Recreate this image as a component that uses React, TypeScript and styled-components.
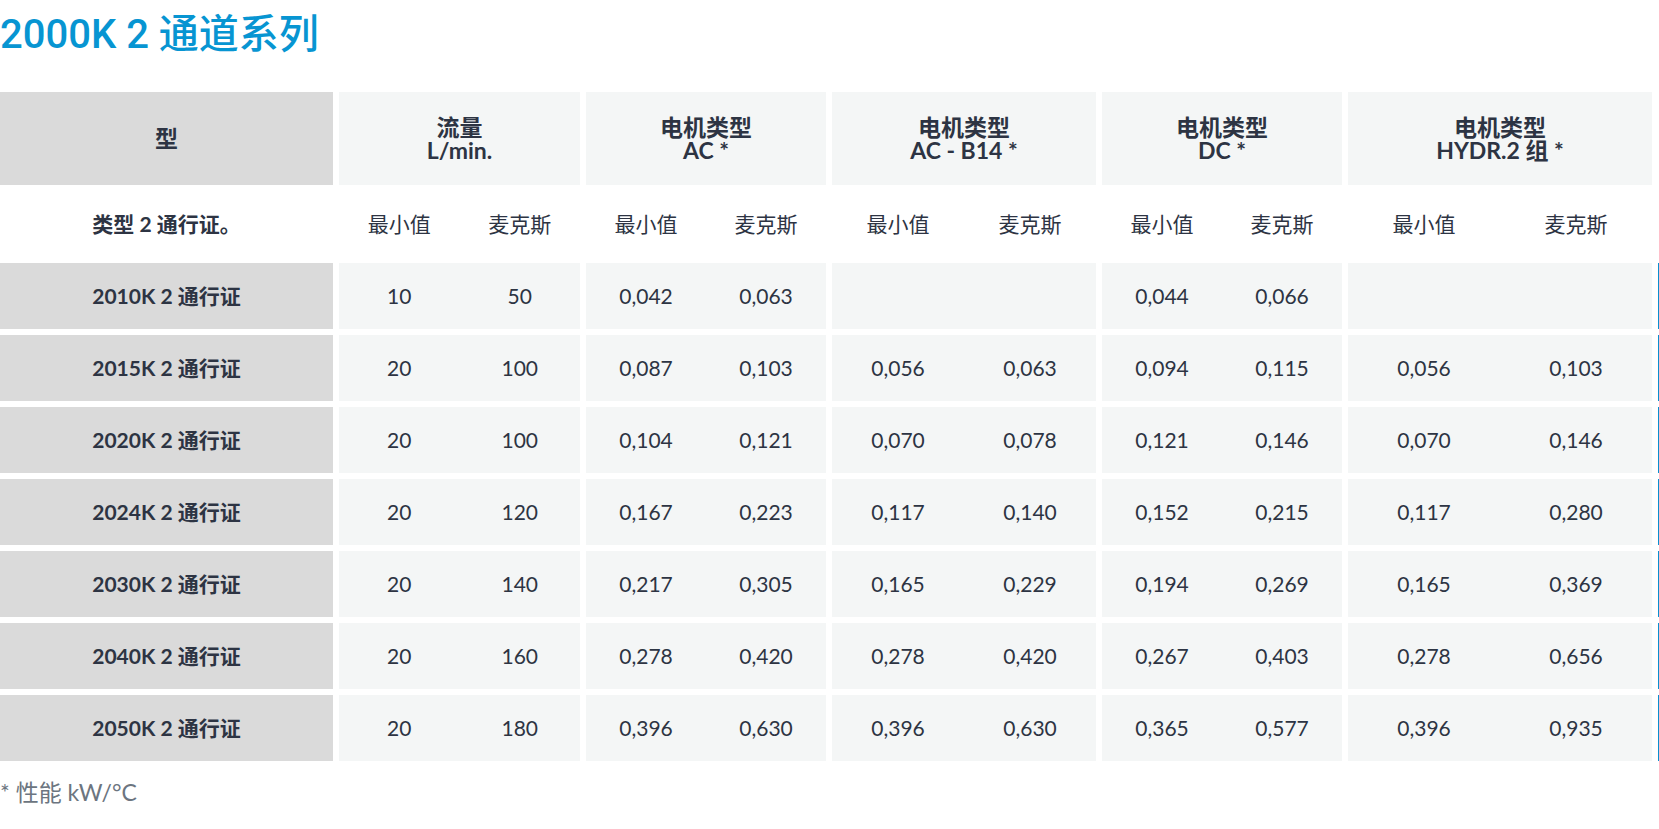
import React from "react";
import styled, { createGlobalStyle } from "styled-components";

const GlobalStyle = createGlobalStyle`
  html, body {
    margin: 0;
    padding: 0;
    background: #ffffff;
  }
  body {
    font-family: "Lato", "Noto Sans CJK SC", sans-serif;
    color: #2d3443;
  }
`;

const Page = styled.div`
  width: 1659px;
  overflow: hidden;
`;

const Title = styled.h2`
  margin: 0;
  padding: 11px 0 0 0;
  height: 92px;
  box-sizing: border-box;
  font-family: "Roboto", "Noto Sans CJK SC", sans-serif;
  font-weight: 500;
  font-size: 40px;
  line-height: 48px;
  color: #0795d2;
`;

const Grid = styled.div`
  display: grid;
  grid-template-columns: 333px 241px 240px 264px 240px 304px 1px;
  grid-template-rows: 93px repeat(8, 66px);
  column-gap: 6px;
  row-gap: 6px;
`;

const Cell = styled.div<{ $tone: "dark" | "light" | "none" }>`
  display: flex;
  align-items: center;
  justify-content: center;
  text-align: center;
  background: ${(p) =>
    p.$tone === "dark" ? "#dadada" : p.$tone === "light" ? "#f4f6f6" : "transparent"};
`;

const HeadText = styled.div`
  font-weight: 700;
  font-size: 23px;
  line-height: 23px;
  color: #2d3443;
`;

const RowLabel = styled.div`
  font-weight: 700;
  font-size: 21px;
  line-height: 24px;
`;

const Pair = styled.div`
  display: grid;
  grid-template-columns: 1fr 1fr;
  width: 100%;
  height: 100%;
  align-items: center;
`;

const Value = styled.span`
  text-align: center;
  font-size: 21px;
  line-height: 24px;
  font-weight: 400;
`;

const Edge = styled.div<{ $on: boolean }>`
  background: ${(p) => (p.$on ? "#0a8fd0" : "transparent")};
`;

const Footnote = styled.p`
  margin: 17px 0 0 0;
  font-size: 23px;
  line-height: 28px;
  color: #6c7580;
`;

type Group = [string, string] | null;

const heads: { top: string; bottom: string }[] = [
  { top: "流量", bottom: "L/min." },
  { top: "电机类型", bottom: "AC *" },
  { top: "电机类型", bottom: "AC - B14 *" },
  { top: "电机类型", bottom: "DC *" },
  { top: "电机类型", bottom: "HYDR.2 组 *" },
];

const rows: { name: string; groups: Group[] }[] = [
  { name: "2010K 2 通行证", groups: [["10", "50"], ["0,042", "0,063"], null, ["0,044", "0,066"], null] },
  { name: "2015K 2 通行证", groups: [["20", "100"], ["0,087", "0,103"], ["0,056", "0,063"], ["0,094", "0,115"], ["0,056", "0,103"]] },
  { name: "2020K 2 通行证", groups: [["20", "100"], ["0,104", "0,121"], ["0,070", "0,078"], ["0,121", "0,146"], ["0,070", "0,146"]] },
  { name: "2024K 2 通行证", groups: [["20", "120"], ["0,167", "0,223"], ["0,117", "0,140"], ["0,152", "0,215"], ["0,117", "0,280"]] },
  { name: "2030K 2 通行证", groups: [["20", "140"], ["0,217", "0,305"], ["0,165", "0,229"], ["0,194", "0,269"], ["0,165", "0,369"]] },
  { name: "2040K 2 通行证", groups: [["20", "160"], ["0,278", "0,420"], ["0,278", "0,420"], ["0,267", "0,403"], ["0,278", "0,656"]] },
  { name: "2050K 2 通行证", groups: [["20", "180"], ["0,396", "0,630"], ["0,396", "0,630"], ["0,365", "0,577"], ["0,396", "0,935"]] },
];

export default function App() {
  return (
    <Page>
      <GlobalStyle />
      <Title>2000K 2 通道系列</Title>
      <Grid>
        <Cell $tone="dark">
          <HeadText>型</HeadText>
        </Cell>
        {heads.map((h, i) => (
          <Cell key={i} $tone="light">
            <HeadText>
              {h.top}
              <br />
              {h.bottom}
            </HeadText>
          </Cell>
        ))}
        <Edge $on={false} />

        <Cell $tone="none">
          <RowLabel>类型 2 通行证。</RowLabel>
        </Cell>
        {heads.map((_, i) => (
          <Cell key={i} $tone="none">
            <Pair>
              <Value>最小值</Value>
              <Value>麦克斯</Value>
            </Pair>
          </Cell>
        ))}
        <Edge $on={false} />

        {rows.map((r) => (
          <React.Fragment key={r.name}>
            <Cell $tone="dark">
              <RowLabel>{r.name}</RowLabel>
            </Cell>
            {r.groups.map((g, i) => (
              <Cell key={i} $tone="light">
                {g && (
                  <Pair>
                    <Value>{g[0]}</Value>
                    <Value>{g[1]}</Value>
                  </Pair>
                )}
              </Cell>
            ))}
            <Edge $on />
          </React.Fragment>
        ))}
      </Grid>
      <Footnote>* 性能 kW/°C</Footnote>
    </Page>
  );
}
